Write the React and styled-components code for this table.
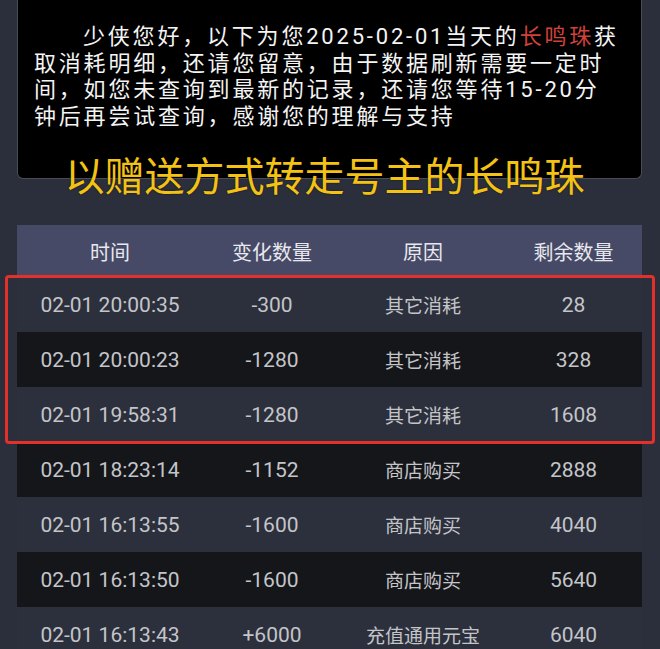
import React from "react";
import styled, { createGlobalStyle } from "styled-components";

const rows = [
  { time: "02-01 20:00:35", delta: "-300", reason: "其它消耗", left: "28" },
  { time: "02-01 20:00:23", delta: "-1280", reason: "其它消耗", left: "328" },
  { time: "02-01 19:58:31", delta: "-1280", reason: "其它消耗", left: "1608" },
  { time: "02-01 18:23:14", delta: "-1152", reason: "商店购买", left: "2888" },
  { time: "02-01 16:13:55", delta: "-1600", reason: "商店购买", left: "4040" },
  { time: "02-01 16:13:50", delta: "-1600", reason: "商店购买", left: "5640" },
  { time: "02-01 16:13:43", delta: "+6000", reason: "充值通用元宝", left: "6040" },
];

const Global = createGlobalStyle`
  html, body {
    margin: 0;
    padding: 0;
    background: #2b2f3b;
    overflow: hidden;
  }
  body {
    font-family: Roboto, "Noto Sans CJK SC", sans-serif;
  }
`;

const Page = styled.div`
  width: 660px;
  height: 649px;
  padding: 0 18px 0 17px;
  box-sizing: border-box;
  overflow: hidden;
`;

const NoticeWrap = styled.div`
  position: relative;
`;

const Notice = styled.div`
  background: #000;
  border: 1px solid #4a4d56;
  border-top: none;
  border-radius: 0 0 6px 6px;
  padding: 24px 18px 0 16px;
  color: #f4f4f4;
  font-size: 22px;
  letter-spacing: 2.8px;
  line-height: 26.7px;
  text-indent: 49px;
  height: 179px;
  box-sizing: border-box;
`;

const Red = styled.span`
  color: #d2413b;
`;

const Caption = styled.div`
  position: absolute;
  left: 0;
  right: 0;
  top: 155px;
  text-align: center;
  font-size: 40px;
  line-height: 46px;
  color: #f4c214;
  padding-right: 10px;
  text-shadow: 0 0 2px rgba(0, 0, 0, 0.6);
`;

const Table = styled.div`
  margin-top: 46px;
`;

const Row = styled.div`
  display: grid;
  grid-template-columns: 186px 138px 164px 137px;
  height: ${p => (p.head ? 52 : 55)}px;
  align-items: center;
  background: ${p => (p.head ? "#464a66" : p.dark ? "#15161a" : "#2c303c")};
  color: ${p => (p.head ? "#e8e8ee" : "#c4c5c9")};
  font-size: ${p => (p.head ? 20 : 21)}px;
`;

const Cell = styled.div`
  text-align: center;
  white-space: nowrap;
  font-size: ${p => (p.cjk ? "19px" : "inherit")};
`;

const Highlight = styled.div`
  position: relative;
  &::after {
    content: "";
    position: absolute;
    top: -2px;
    bottom: -2px;
    left: -12px;
    right: -13px;
    border: 3px solid #e3302b;
    border-radius: 4px;
    pointer-events: none;
  }
`;

function DataRow({ r, dark }) {
  return (
    <Row dark={dark}>
      <Cell>{r.time}</Cell>
      <Cell>{r.delta}</Cell>
      <Cell cjk>{r.reason}</Cell>
      <Cell>{r.left}</Cell>
    </Row>
  );
}

export default function App() {
  return (
    <Page>
      <Global />
      <NoticeWrap>
        <Notice>
          少侠您好，以下为您2025-02-01当天的<Red>长鸣珠</Red>获取消耗明细，还请您留意，由于数据刷新需要一定时间，如您未查询到最新的记录，还请您等待15-20分钟后再尝试查询，感谢您的理解与支持
        </Notice>
        <Caption>以赠送方式转走号主的长鸣珠</Caption>
      </NoticeWrap>
      <Table>
        <Row head>
          <Cell>时间</Cell>
          <Cell>变化数量</Cell>
          <Cell>原因</Cell>
          <Cell>剩余数量</Cell>
        </Row>
        <Highlight>
          {rows.slice(0, 3).map((r, i) => (
            <DataRow key={i} r={r} dark={i % 2 === 1} />
          ))}
        </Highlight>
        {rows.slice(3).map((r, i) => (
          <DataRow key={i} r={r} dark={(i + 3) % 2 === 1} />
        ))}
      </Table>
    </Page>
  );
}
